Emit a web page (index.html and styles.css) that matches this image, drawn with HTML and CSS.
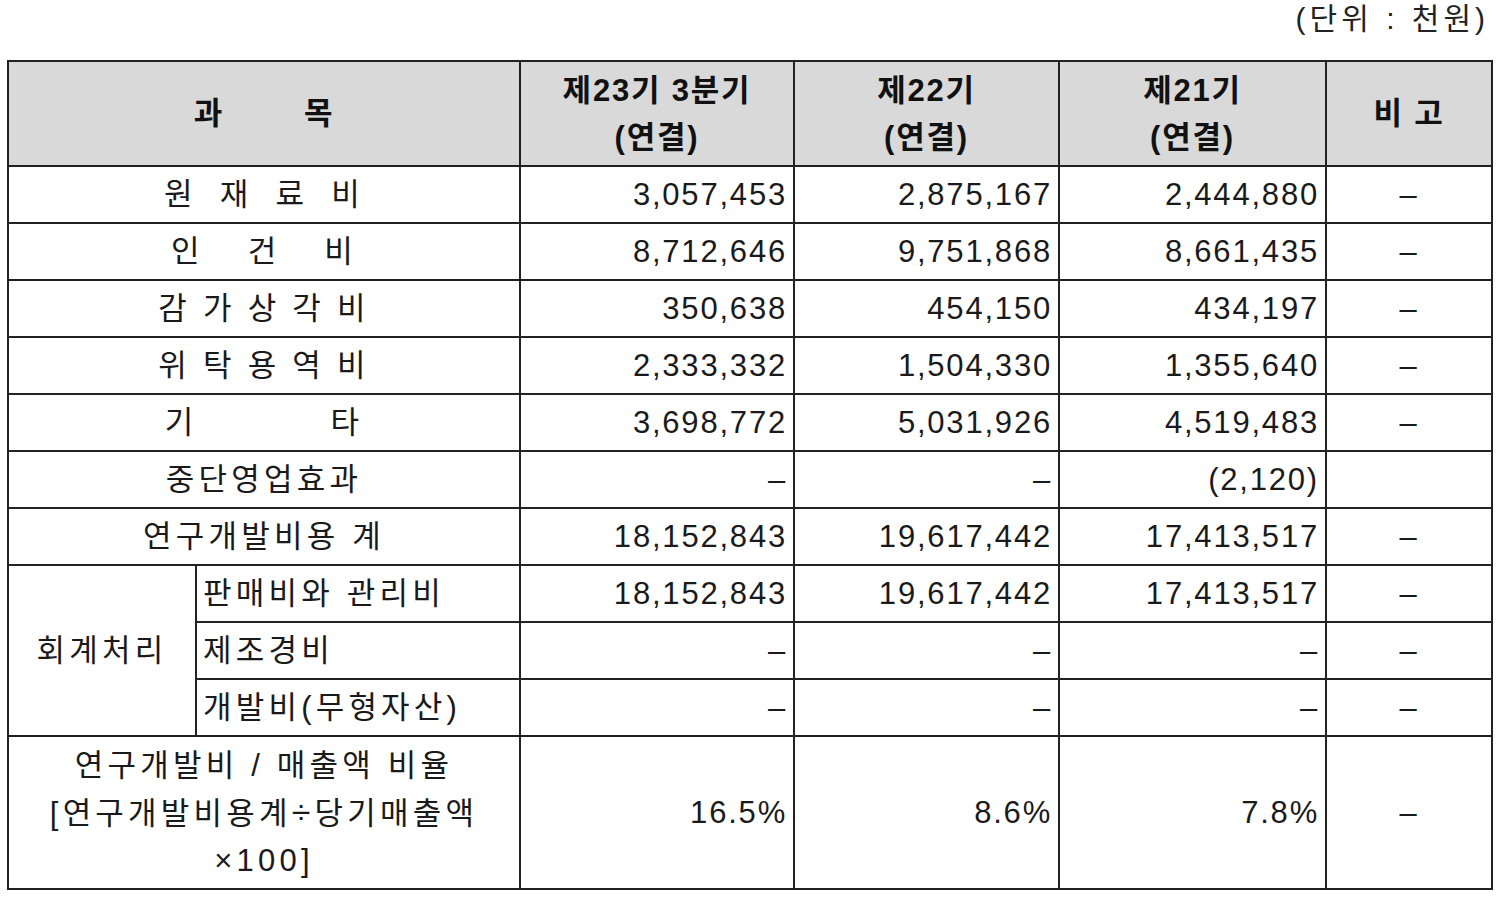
FILE: index.html
```html
<!DOCTYPE html>
<html lang="ko">
<head>
<meta charset="utf-8">
<link rel="stylesheet" href="styles.css">
</head>
<body>
<div class="page">
  <div class="unit">(단위 : 천원)</div>
  <table class="rd">
    <colgroup>
      <col class="c-a"><col class="c-b"><col class="c-n1"><col class="c-n2"><col class="c-n3"><col class="c-r">
    </colgroup>
    <thead>
      <tr class="hrow">
        <th colspan="2"><span class="sp-hd">과</span>목</th>
        <th>제23기 3분기<br>(연결)</th>
        <th>제22기<br>(연결)</th>
        <th>제21기<br>(연결)</th>
        <th>비 고</th>
      </tr>
    </thead>
    <tbody>
      <tr><td colspan="2" class="lbl"><span class="g1">원</span><span class="g1">재</span><span class="g1">료</span>비</td><td class="num">3,057,453</td><td class="num">2,875,167</td><td class="num">2,444,880</td><td class="dash">–</td></tr>
      <tr><td colspan="2" class="lbl"><span class="g2">인</span><span class="g2">건</span>비</td><td class="num">8,712,646</td><td class="num">9,751,868</td><td class="num">8,661,435</td><td class="dash">–</td></tr>
      <tr><td colspan="2" class="lbl"><span class="g3">감</span><span class="g3">가</span><span class="g3">상</span><span class="g3">각</span>비</td><td class="num">350,638</td><td class="num">454,150</td><td class="num">434,197</td><td class="dash">–</td></tr>
      <tr><td colspan="2" class="lbl"><span class="g3">위</span><span class="g3">탁</span><span class="g3">용</span><span class="g3">역</span>비</td><td class="num">2,333,332</td><td class="num">1,504,330</td><td class="num">1,355,640</td><td class="dash">–</td></tr>
      <tr><td colspan="2" class="lbl"><span class="g4">기</span>타</td><td class="num">3,698,772</td><td class="num">5,031,926</td><td class="num">4,519,483</td><td class="dash">–</td></tr>
      <tr><td colspan="2" class="lbl">중단영업효과</td><td class="num">–</td><td class="num">–</td><td class="num">(2,120)</td><td class="dash"></td></tr>
      <tr><td colspan="2" class="lbl">연구개발비용 계</td><td class="num">18,152,843</td><td class="num">19,617,442</td><td class="num">17,413,517</td><td class="dash">–</td></tr>
      <tr><td rowspan="3" class="lbl">회계처리</td><td class="sub">판매비와 관리비</td><td class="num">18,152,843</td><td class="num">19,617,442</td><td class="num">17,413,517</td><td class="dash">–</td></tr>
      <tr><td class="sub">제조경비</td><td class="num">–</td><td class="num">–</td><td class="num">–</td><td class="dash">–</td></tr>
      <tr><td class="sub">개발비(무형자산)</td><td class="num">–</td><td class="num">–</td><td class="num">–</td><td class="dash">–</td></tr>
      <tr class="tall"><td colspan="2" class="lbl">연구개발비 / 매출액 비율<br>[연구개발비용계<span class="div">÷</span>당기매출액<br>×100]</td><td class="num">16.5%</td><td class="num">8.6%</td><td class="num">7.8%</td><td class="dash">–</td></tr>
    </tbody>
  </table>
</div>
</body>
</html>
```
FILE: styles.css
```css
html, body {
  margin: 0;
  padding: 0;
  background: #ffffff;
}
.page {
  padding: 0 0 0 7px;
  font-family: "Liberation Sans", "Noto Sans CJK KR", sans-serif;
  color: #1a1a1a;
  font-size: 31px;
  letter-spacing: 1.8px;
}
.unit {
  height: 60px;
  box-sizing: border-box;
  width: 1486px;
  text-align: right;
  padding-right: 4px;
  line-height: 38px;
  font-size: 30px;
  letter-spacing: 4px;
  word-spacing: 1px;
  color: #222;
}
.rd {
  border-collapse: collapse;
  table-layout: fixed;
  width: 1484px;
  border: 2px solid #666;
}
.c-a { width: 188px; }
.c-b { width: 324px; }
.c-n1 { width: 274px; }
.c-n2 { width: 265px; }
.c-n3 { width: 267px; }
.c-r { width: 166px; }
.rd th, .rd td {
  border: 2px solid #222;
  padding: 0 6px;
  line-height: 47px;
  height: 57px;
  box-sizing: border-box;
  white-space: nowrap;
}
.rd th {
  background: #d9d9d9;
  font-weight: bold;
  color: #111;
  text-align: center;
  height: 105px;
}
.sp-hd { margin-right: 80px; }
.lbl { text-align: center; letter-spacing: 4.2px; }
.sub { text-align: left; padding-left: 6px; letter-spacing: 4.2px; }
.num { text-align: right; padding-right: 4px; }
.dash { text-align: center; }
.div { font-size: 34px; }
.g1 { margin-right: 23px; }
.g2 { margin-right: 44px; }
.g3 { margin-right: 12px; }
.g4 { margin-right: 133px; }
.tall td { height: 153px; }
```
